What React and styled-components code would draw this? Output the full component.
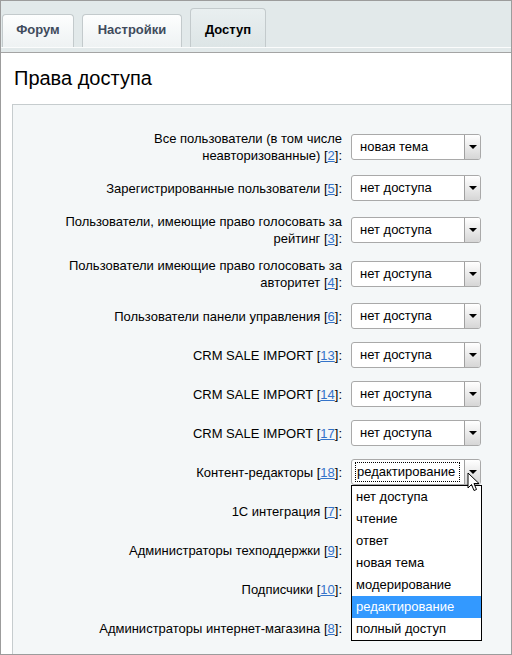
import React from 'react';
import styled, { createGlobalStyle } from 'styled-components';

const GlobalStyle = createGlobalStyle`
  body {
    margin: 0;
    font-family: "Liberation Sans", Arial, sans-serif;
    background: #fff;
  }
`;

const Frame = styled.div`
  width: 512px;
  height: 655px;
  box-sizing: border-box;
  border: 1px solid #9c9c9c;
  overflow: hidden;
  position: relative;
  background: #fff;
`;

const TabBar = styled.div`
  background: #e2e9ea;
  padding-top: 7px;
  border-bottom: 1px solid #a4a4a4;
`;

const TabRow = styled.div`
  display: flex;
  align-items: flex-end;
  gap: 8px;
  padding-left: 1px;
  height: 39px;
  border-bottom: 1px solid #fbfcfc;
  margin-bottom: 4px;
`;

const Tab = styled.div`
  box-sizing: border-box;
  width: ${p => p.w}px;
  height: ${p => (p.active ? 39 : 33)}px;
  display: flex;
  align-items: flex-end;
  justify-content: center;
  padding-bottom: 10px;
  border: 1px solid #c3cacc;
  border-bottom: none;
  border-radius: 4px 4px 0 0;
  background: ${p => (p.active
    ? 'linear-gradient(#e9eff0, #dde5e6)'
    : 'linear-gradient(#fdfefe, #eef2f3)')};
  font-size: 13px;
  font-weight: bold;
  color: ${p => (p.active ? '#000' : '#3f4b5c')};
`;

const Title = styled.div`
  height: 51px;
  box-sizing: border-box;
  padding: 14px 0 0 13px;
  font-size: 20px;
  color: #000;
`;

const Panel = styled.div`
  margin-left: 11px;
  border-top: 1px solid #c6ccce;
  border-left: 1px solid #c6ccce;
  background: #f4f7f8;
  padding-top: 26px;
  display: flex;
  flex-direction: column;
  gap: 13px;
  height: 600px;
`;

const Row = styled.div`
  display: flex;
  align-items: center;
  position: relative;
  margin-top: ${p => (p.shift ? 1 : 0)}px;
`;

const Label = styled.div`
  flex: 0 0 329px;
  box-sizing: border-box;
  padding-left: 48px;
  margin: -1.5px 0;
  text-align: right;
  font-size: 13px;
  line-height: 17px;
  color: #000;
`;

const Tail = styled.span`
  white-space: nowrap;
`;

const Ref = styled.a`
  color: #3473c9;
  text-decoration: underline;
`;

const Select = styled.div`
  margin-left: 9px;
  width: 130px;
  height: 26px;
  box-sizing: border-box;
  border: 1px solid #a9a9a9;
  border-radius: 3px;
  background: #fff;
  display: flex;
  align-items: center;
  position: relative;
  font-size: 13px;
  color: #000;
  padding-left: 7px;
`;

const Value = styled.span`
  flex: 1;
  box-sizing: border-box;
  height: 20px;
  line-height: 18px;
  padding-left: ${p => (p.focus ? 1 : 0)}px;
  margin-left: ${p => (p.focus ? -4 : 0)}px;
  margin-right: 4px;
  border: 1px dotted ${p => (p.focus ? '#000' : 'transparent')};
`;

const Arrow = styled.div`
  width: 16px;
  height: 24px;
  box-sizing: border-box;
  border-left: 1px solid #a0a0a0;
  border-radius: 0 2px 2px 0;
  background: linear-gradient(#ffffff, #d6d6d6);
  display: flex;
  align-items: center;
  justify-content: center;
  &::after {
    content: '';
    border-left: 4px solid transparent;
    border-right: 4px solid transparent;
    border-top: 4px solid #000;
  }
`;

const List = styled.div`
  position: absolute;
  left: 338px;
  top: 26px;
  width: 131px;
  box-sizing: border-box;
  border: 1px solid #000;
  background: #fff;
  z-index: 2;
`;

const Option = styled.div`
  height: 22px;
  line-height: 22px;
  padding-left: 4px;
  font-size: 13px;
  color: ${p => (p.hi ? '#fff' : '#000')};
  background: ${p => (p.hi ? '#3399ff' : 'transparent')};
`;

const Cursor = styled.svg`
  position: absolute;
  left: 454px;
  top: 13px;
  z-index: 3;
`;

const tabs = [
  { name: 'Форум', w: 72 },
  { name: 'Настройки', w: 100 },
  { name: 'Доступ', w: 76, active: true },
];

// rows after the open one lie under its list, so their value is not drawn
const rows = [
  { label: 'Все пользователи (в том числе', tail: 'неавторизованные)', n: 2, v: 'новая тема' },
  { label: 'Зарегистрированные', tail: 'пользователи', n: 5, v: 'нет доступа' },
  { label: 'Пользователи, имеющие право голосовать за', tail: 'рейтинг', n: 3, v: 'нет доступа' },
  { label: 'Пользователи имеющие право голосовать за', tail: 'авторитет', n: 4, v: 'нет доступа' },
  { label: 'Пользователи панели', tail: 'управления', n: 6, v: 'нет доступа', shift: true },
  { label: 'CRM SALE', tail: 'IMPORT', n: 13, v: 'нет доступа' },
  { label: 'CRM SALE', tail: 'IMPORT', n: 14, v: 'нет доступа' },
  { label: 'CRM SALE', tail: 'IMPORT', n: 17, v: 'нет доступа' },
  { label: '', tail: 'Контент-редакторы', n: 18, v: 'редактирование', open: true },
  { label: '1С', tail: 'интеграция', n: 7, v: '' },
  { label: 'Администраторы', tail: 'техподдержки', n: 9, v: '' },
  { label: '', tail: 'Подписчики', n: 10, v: '' },
  { label: 'Администраторы', tail: 'интернет-магазина', n: 8, v: '' },
];

const options = ['нет доступа', 'чтение', 'ответ', 'новая тема', 'модерирование', 'редактирование', 'полный доступ'];

export default function App() {
  return (
    <Frame>
      <GlobalStyle />
      <TabBar>
        <TabRow>
          {tabs.map(t => (
            <Tab key={t.name} w={t.w} active={t.active}>{t.name}</Tab>
          ))}
        </TabRow>
      </TabBar>
      <Title>Права доступа</Title>
      <Panel>
        {rows.map((r, i) => (
          <Row key={i} shift={r.shift}>
            <Label>
              {r.label ? r.label + ' ' : ''}
              <Tail>{r.tail} [<Ref>{r.n}</Ref>]:</Tail>
            </Label>
            <Select>
              <Value focus={r.open}>{r.v}</Value>
              <Arrow />
            </Select>
            {r.open && (
              <>
                <List>
                  {options.map(o => (
                    <Option key={o} hi={o === r.v}>{o}</Option>
                  ))}
                </List>
                <Cursor width="13" height="20" viewBox="0 0 13 20">
                  <path d="M1 1 L1 16 L4.5 12.5 L7 18.5 L9.5 17.5 L7 11.5 L12 11.5 Z" fill="#fff" stroke="#000" strokeWidth="1" strokeLinejoin="miter" />
                </Cursor>
              </>
            )}
          </Row>
        ))}
      </Panel>
    </Frame>
  );
}
